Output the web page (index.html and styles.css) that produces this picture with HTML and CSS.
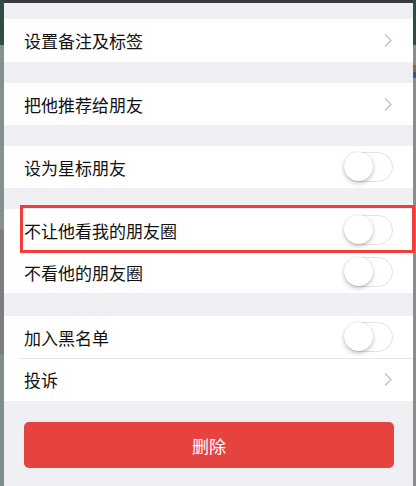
FILE: index.html
```html
<!DOCTYPE html>
<html lang="zh-CN">
<head>
<meta charset="utf-8">
<title>资料设置</title>
<link rel="stylesheet" href="styles.css">
</head>
<body>
<div class="screen">
  <div class="strip strip-left"></div>
  <main class="sheet">
    <div class="topbar"></div>
    <section class="group first">
      <div class="cell tall"><span class="label">设置备注及标签</span><svg class="chev" viewBox="0 0 8 14"><polyline points="1,1 7,7 1,13"/></svg></div>
    </section>
    <section class="group">
      <div class="cell"><span class="label">把他推荐给朋友</span><svg class="chev" viewBox="0 0 8 14"><polyline points="1,1 7,7 1,13"/></svg></div>
    </section>
    <section class="group">
      <div class="cell"><span class="label">设为星标朋友</span><span class="switch"><span class="knob"></span></span></div>
    </section>
    <section class="group highlight-group">
      <div class="cell"><span class="label">不让他看我的朋友圈</span><span class="switch"><span class="knob"></span></span></div>
      <div class="cell sep"><span class="label">不看他的朋友圈</span><span class="switch"><span class="knob"></span></span></div>
      <div class="mark"></div>
    </section>
    <section class="group wide-gap">
      <div class="cell"><span class="label">加入黑名单</span><span class="switch"><span class="knob"></span></span></div>
      <div class="cell sep tall"><span class="label">投诉</span><svg class="chev" viewBox="0 0 8 14"><polyline points="1,1 7,7 1,13"/></svg></div>
    </section>
    <div class="actions">
      <button class="danger">删除</button>
    </div>
  </main>
  <div class="strip strip-right"></div>
</div>
</body>
</html>
```

FILE: styles.css
```css
html, body {
  margin: 0;
  padding: 0;
  width: 416px;
  height: 486px;
  overflow: hidden;
  font-family: "Noto Sans CJK SC", "Noto Sans", sans-serif;
}

.screen {
  display: flex;
  width: 416px;
  height: 486px;
}

.strip {
  flex: none;
}

.strip-left {
  width: 4px;
  background: linear-gradient(to bottom,
    #2f4c45 0, #2f4c45 45px,
    #86918e 45px, #86918e 230px,
    #7a7e7c 230px, #7a7e7c 355px,
    #7f8c88 355px, #7f8c88 100%);
}

.strip-right {
  width: 3px;
  background: linear-gradient(to bottom,
    #2f4c45 0, #2f4c45 45px,
    #8c8c8c 45px, #8c8c8c 65px,
    #8a6a3a 65px, #8a6a3a 72px,
    #2b5d85 72px, #2b5d85 78px,
    #8c8c8c 78px, #8c8c8c 100%);
}

.sheet {
  flex: 1;
  display: flex;
  flex-direction: column;
  background: #efeff4;
  position: relative;
}

.topbar {
  height: 3px;
  background: #3b3b3d;
}

.group {
  background: #fff;
  margin-top: 21px;
  position: relative;
}

.group.first {
  margin-top: 16px;
}

.group.wide-gap {
  margin-top: 23px;
}

.cell {
  height: 42px;
  display: flex;
  align-items: center;
  justify-content: space-between;
  padding: 0 20px;
  position: relative;
}

.cell.tall {
  height: 43px;
}

.cell.sep::before {
  content: "";
  position: absolute;
  left: 15px;
  right: 0;
  top: 0;
  height: 1px;
  background: #e5e5e5;
}

.label {
  font-size: 17px;
  color: #111;
  line-height: 1;
}

.chev {
  width: 8px;
  height: 15px;
  margin-right: 1px;
  fill: none;
  stroke: #c4c4c8;
  stroke-width: 1.5;
}

.switch {
  position: relative;
  width: 49px;
  height: 30px;
  box-sizing: border-box;
  border: 1.5px solid #e3e3e3;
  border-radius: 16px;
  background: #fff;
}

.knob {
  position: absolute;
  left: -1px;
  top: -1px;
  width: 29px;
  height: 29px;
  border-radius: 50%;
  background: #fff;
  box-shadow: 0 2px 4px rgba(0,0,0,0.25), 0 0 1px rgba(0,0,0,0.15);
}

.mark {
  position: absolute;
  left: 16px;
  top: -4px;
  width: 395px;
  height: 48px;
  box-sizing: border-box;
  border: 3px solid #f63b3b;
  z-index: 2;
}

.actions {
  padding: 21px 19px 0 20px;
}

.danger {
  display: block;
  width: 100%;
  height: 46px;
  border: none;
  border-radius: 5px;
  background: #e64340;
  color: #fff;
  font-family: "Noto Sans CJK SC", "Noto Sans", sans-serif;
  font-size: 17px;
}
```
